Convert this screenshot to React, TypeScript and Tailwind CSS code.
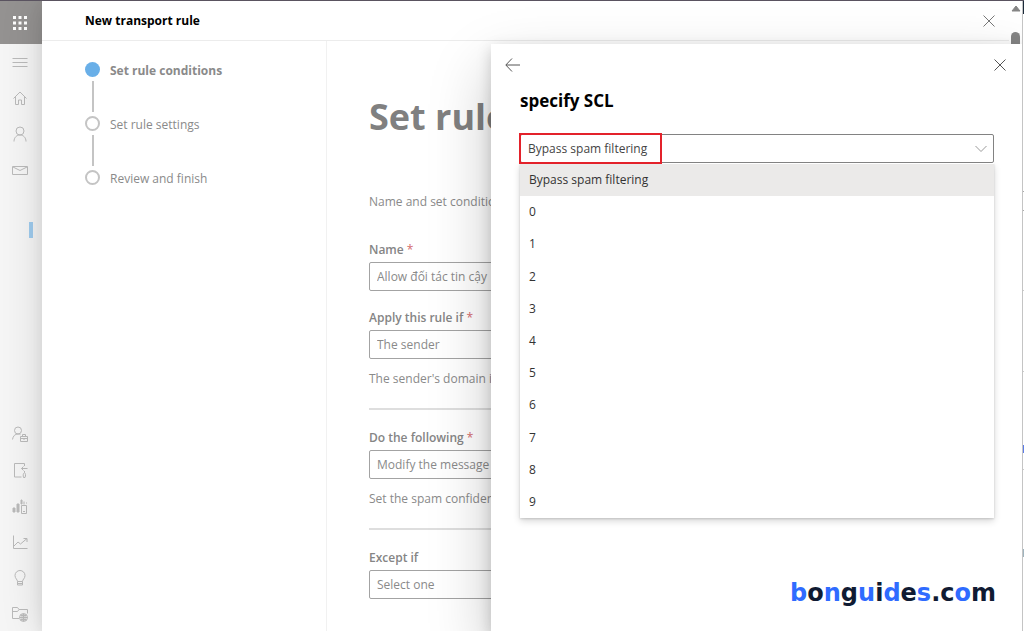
import { ReactNode, useState } from 'react';

const sclLevels = ['Bypass spam filtering', '0', '1', '2', '3', '4', '5', '6', '7', '8', '9'];

const steps = [
  { label: 'Set rule conditions', active: true },
  { label: 'Set rule settings', active: false },
  { label: 'Review and finish', active: false },
];

const brand = [
  { text: 'b', blue: true },
  { text: 'o', blue: false },
  { text: 'n', blue: true },
  { text: 'g', blue: false },
  { text: 'u', blue: true },
  { text: 'i', blue: false },
  { text: 'd', blue: true },
  { text: 'e', blue: false },
  { text: 's', blue: true },
  { text: '.c', blue: false },
  { text: 'o', blue: true },
  { text: 'm', blue: false },
];

function Icon({ children }: { children: ReactNode }) {
  return (
    <svg width="16" height="16" viewBox="0 0 16 16" fill="none" stroke="currentColor" strokeWidth="1" aria-hidden="true">
      {children}
    </svg>
  );
}

const topIcons = [
  { name: 'Navigation', icon: <path d="M.5 4.5h15M.5 8.5h15M.5 12.5h15" /> },
  { name: 'Home', icon: <path d="M1.5 8.500 8 2l6.500 6.500M3.500 7v7.500h3v-4.500h3v4.500h3V7" /> },
  {
    name: 'Users',
    icon: (
      <>
        <circle cx="8" cy="5" r="4" />
        <path d="M2 15.500c0-4 2.700-6.500 6-6.500s6 2.500 6 6.500" />
      </>
    ),
  },
  { name: 'Mail', icon: <path d="M.5 4.500h15v8H.5zM1 5l7 3.500L15 5" /> },
];

const bottomIcons = [
  {
    name: 'Roles',
    icon: (
      <>
        <circle cx="6" cy="4.500" r="3.500" />
        <path d="M.5 13.500C1 10 3 8 6 8c1 0 1.800.2 2.500.7" />
        <path d="M8.500 10.500h7v5h-7zM10.500 10.500v-2h3v2M8.500 12.500h7M12 12v2" />
      </>
    ),
  },
  { name: 'Migration', icon: <path d="M12.500 4V1.500h-10v13.500h7M15.500 6.500h-6M11.500 4.500l-2 2 2 2M12.500 9v1.500c-1.500 1-1.500 3-1 5h1.500c1-2 .5-4-.5-5" /> },
  {
    name: 'Reports',
    icon: (
      <>
        <path d="M1 10h2v4H1zM5 6h2v8H5zM9 2h1v4H9z" fill="currentColor" />
        <path d="M9.500 7.500h5v8h-5zM12 3.500v3M14.500 4.500v1M11 13.500h2" />
      </>
    ),
  },
  { name: 'Insights', icon: <path d="M1.500 1.500v13h14M2 12l4-4 2.500 2L15 4.500M11.500 4.500H15V8" /> },
  { name: 'Training', icon: <path d="M5.500 11.500c0-2-2.500-3-2.500-6a5 5 0 0 1 10 0c0 3-2.500 4-2.500 6zM5.500 11.500v3.500h5v-3.500M5.500 13.500h5" /> },
  {
    name: 'Public folders',
    icon: (
      <>
        <path d="M7 12.500H.5v-11h5l1.500 2h8.500v4M.5 5.500h5l1.500-2" />
        <circle cx="11.500" cy="11.500" r="4" />
        <path d="M7.500 11.500h8M11.500 7.500v8M8.500 9.500h6M8.500 13.500h6M10 8v7M13 8v7" />
      </>
    ),
  },
];

function RailButton({ name, icon }: { name: string; icon: ReactNode }) {
  return (
    <button type="button" aria-label={name} className="flex h-9 w-full shrink-0 items-center justify-center pr-[2px] text-[#bababa]">
      <Icon>{icon}</Icon>
    </button>
  );
}

function Rail() {
  return (
    <aside className="flex w-[42px] shrink-0 flex-col overflow-hidden bg-[#f5f5f5]">
      <button type="button" aria-label="App launcher" className="flex h-[43px] shrink-0 items-center justify-center bg-[#949291] pr-[2px] text-white">
        <svg width="14" height="14" viewBox="0 0 14 14" fill="currentColor" aria-hidden="true">
          <path d="M0 0h3v3H0zM5.500 0h3v3h-3zM11 0h3v3h-3zM0 5.500h3v3H0zM5.500 5.500h3v3h-3zM11 5.500h3v3h-3zM0 11h3v3H0zM5.500 11h3v3h-3zM11 11h3v3h-3z" />
        </svg>
      </button>
      <nav aria-label="Admin center" className="flex flex-col">
        {topIcons.map((item) => (
          <RailButton key={item.name} name={item.name} icon={item.icon} />
        ))}
        <span className="mt-[34px] mr-[9px] h-4 w-1 self-end bg-[#9fcbee]" />
        <div className="mt-[178px] flex flex-col">
          {bottomIcons.map((item) => (
            <RailButton key={item.name} name={item.name} icon={item.icon} />
          ))}
        </div>
      </nav>
    </aside>
  );
}

function Steps() {
  return (
    <ol className="w-[285px] shrink-0 border-r border-[#f1f1f1] pt-[21px] pl-[43px]">
      {steps.map((step, i) => (
        <li key={step.label} className="flex gap-[10px]">
          <div className="flex w-[15px] flex-col items-center">
            <span
              className={`size-[15px] shrink-0 rounded-full ${step.active ? 'bg-[#69afe8]' : 'border-2 border-[#c4c4c4]'}`}
            />
            {i < steps.length - 1 && <span className="my-1 h-[31px] w-[2px] bg-[#c4c4c4]" />}
          </div>
          <span className={`text-xs leading-[18px] text-[#8a8a8a] ${step.active ? 'font-bold' : ''}`}>{step.label}</span>
        </li>
      ))}
    </ol>
  );
}

function Label({ id, text, required }: { id: string; text: string; required?: boolean }) {
  return (
    <label htmlFor={id} className="mb-[2px] block font-semibold text-[#858585]">
      {text}
      {required && <span className="font-normal text-[#d4696d]"> *</span>}
    </label>
  );
}

const fieldClass = 'block h-[29px] w-full appearance-none rounded-[2px] border border-[#a3a3a3] bg-white px-[7px] text-[#8a8a8a]';

function RuleForm() {
  const [name, setName] = useState('Allow đối tác tin cậy');

  return (
    <form className="min-w-0 flex-1 px-[42px] pt-[52px] text-xs leading-5 text-[#8a8a8a]">
      <h1 className="text-[36px] leading-[48px] font-bold text-[#808080]">Set rule</h1>
      <p className="mt-[51px] mb-[28px]">Name and set conditions</p>

      <Label id="name" text="Name" required />
      <input id="name" value={name} onChange={(e) => setName(e.target.value)} className={fieldClass} />

      <div className="mt-[17px]">
        <Label id="apply" text="Apply this rule if" required />
        <select id="apply" className={fieldClass}>
          <option>The sender</option>
        </select>
        <p className="mt-[10px]">The sender's domain is</p>
      </div>

      <hr className="mt-[19px] mb-[18px] border-t-2 border-[#dedede]" />

      <Label id="action" text="Do the following" required />
      <select id="action" className={fieldClass}>
        <option>Modify the message</option>
      </select>
      <p className="mt-[10px]">Set the spam confidence</p>

      <hr className="mt-[19px] mb-[18px] border-t-2 border-[#dedede]" />

      <Label id="except" text="Except if" />
      <select id="except" className={fieldClass}>
        <option>Select one</option>
      </select>
    </form>
  );
}

function CloseIcon() {
  return (
    <svg width="12" height="12" viewBox="0 0 12 12" fill="none" stroke="currentColor" aria-hidden="true">
      <path d="M.5.5l11 11M11.500.5l-11 11" />
    </svg>
  );
}

function SclPanel() {
  const [level, setLevel] = useState(sclLevels[0]);

  return (
    <section
      aria-label="specify SCL"
      className="absolute top-[43px] right-0 bottom-0 flex w-[531px] flex-col bg-white pr-[28px] pl-[29px] shadow-[0_26px_58px_rgba(0,0,0,0.22),0_5px_14px_rgba(0,0,0,0.18)]"
    >
      <div className="-mr-[12px] -ml-[15px] flex h-[42px] shrink-0 items-center justify-between text-[#555]">
        <button type="button" aria-label="Back">
          <svg width="15" height="14" viewBox="0 0 15 14" fill="none" stroke="currentColor" aria-hidden="true">
            <path d="M7 .5.800 7 7 13.500M1 7h14" />
          </svg>
        </button>
        <button type="button" aria-label="Close panel">
          <CloseIcon />
        </button>
      </div>
      <h2 className="mt-[3px] text-[17px] leading-6 font-bold text-black">
        <label htmlFor="scl">specify SCL</label>
      </h2>
      <div className="relative mt-[21px]">
        <select
          id="scl"
          value={level}
          onChange={(e) => setLevel(e.target.value)}
          className="block h-[29px] w-full appearance-none rounded-[2px] border border-[#828282] bg-white px-[7px] text-xs text-[#444]"
        >
          {sclLevels.map((l) => (
            <option key={l}>{l}</option>
          ))}
        </select>
        <svg className="pointer-events-none absolute top-[11px] right-[7px] text-[#999]" width="12" height="8" viewBox="0 0 12 8" fill="none" stroke="currentColor" aria-hidden="true">
          <path d="M.5 1 6 6.500 11.500 1" />
        </svg>
        <span className="pointer-events-none absolute -top-px -left-px h-[31px] w-[143px] border-2 border-[#e3222b]" />
      </div>
      <ul className="grid h-[355px] shrink-0 auto-rows-fr bg-white pt-px shadow-[0_3px_7px_rgba(0,0,0,0.16),0_1px_2px_rgba(0,0,0,0.14)]">
        {sclLevels.map((l) => (
          <li key={l} className="flex">
            <button
              type="button"
              onClick={() => setLevel(l)}
              className={`w-full px-[9px] text-left text-xs text-[#333] ${l === level ? 'bg-[#ebeae9]' : ''}`}
            >
              {l}
            </button>
          </li>
        ))}
      </ul>
      <p className="mt-[59px] -mr-[2px] self-end font-['DejaVu_Sans',sans-serif] text-2xl leading-8 font-bold">
        {brand.map((part, i) => (
          <span key={i} className={part.blue ? 'text-[#2f6bff]' : 'text-[#101b33]'}>
            {part.text}
          </span>
        ))}
      </p>
    </section>
  );
}

export default function App() {
  return (
    <div className="flex h-screen overflow-hidden border-t border-[#5a5360] bg-white font-['Open_Sans','Noto_Sans',sans-serif]">
      <Rail />
      <main className="relative flex min-w-0 flex-1 bg-white shadow-[0_0_40px_rgba(0,0,0,0.14),0_5px_14px_rgba(0,0,0,0.08)]">
        <div className="flex min-w-0 flex-1 flex-col">
          <header className="flex h-10 shrink-0 items-center justify-between border-b border-[#ececec] pr-[14px] pl-[43px]">
            <h2 className="text-xs font-bold text-black">New transport rule</h2>
            <button type="button" aria-label="Close" className="text-[#777]">
              <CloseIcon />
            </button>
          </header>
          <div className="flex min-h-0 flex-1">
            <Steps />
            <RuleForm />
          </div>
        </div>
        <div className="flex w-[13px] shrink-0 flex-col items-center pt-1" aria-hidden="true">
          <svg width="10" height="8" viewBox="0 0 10 8" fill="#858585">
            <path d="M5 1 9 6H1z" stroke="#858585" strokeLinejoin="round" />
          </svg>
          <span className="mt-[19px] h-20 w-[9px] rounded-full bg-[#858585]" />
        </div>
        <SclPanel />
      </main>
      <div className="relative flex w-[2px] shrink-0 flex-col border-l border-[#c4c4c4] bg-white">
        <span className="h-[13px] bg-[#1b2a3a]" />
        <span className="mt-[177px] h-px bg-[#aaa]" />
        <span className="mt-[18px] h-px bg-[#aaa]" />
        <span className="mt-[79px] h-px bg-[#ccc]" />
        <span className="mt-[80px] h-px bg-[#ccc]" />
        <span className="mt-[73px] h-2 bg-[#5b7be8]" />
        <span className="mt-[16px] h-px bg-[#ccc]" />
        <span className="mt-[79px] h-2 bg-[#9fb4be]" />
      </div>
    </div>
  );
}
